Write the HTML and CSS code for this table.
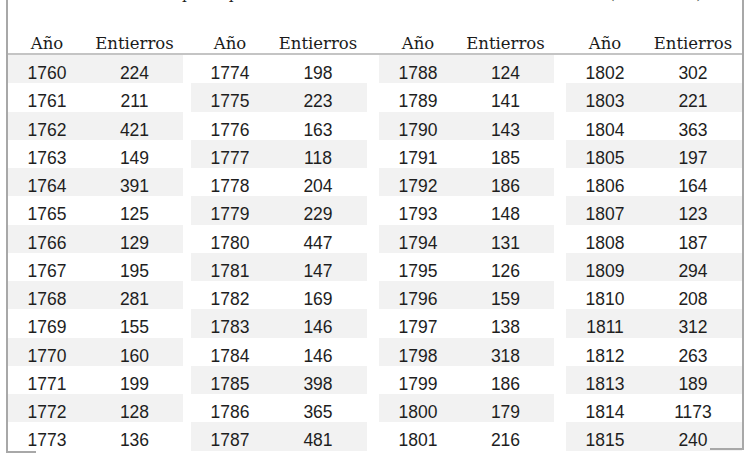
FILE: index.html
```html
<!DOCTYPE html>
<html lang="es">
<head>
<meta charset="utf-8">
<title>Entierros</title>
<link rel="stylesheet" href="styles.css">
</head>
<body>
<div class="frame">
  <div class="title"><div class="title-text"><span class="t1">Entierros en la parroquia de Santa Catarina</span><span class="t2">(1760-1815)</span></div></div>
  <div class="head">
    <div class="g g1"><div class="h"><span>Año</span><span>Entierros</span></div></div>
    <div class="g g2"><div class="h"><span>Año</span><span>Entierros</span></div></div>
    <div class="g g3"><div class="h"><span>Año</span><span>Entierros</span></div></div>
    <div class="g g4"><div class="h"><span>Año</span><span>Entierros</span></div></div>
  </div>
  <div class="body">
    <div class="g g1">
      <div class="r s"><span>1760</span><span>224</span></div>
      <div class="r"><span>1761</span><span>211</span></div>
      <div class="r s"><span>1762</span><span>421</span></div>
      <div class="r"><span>1763</span><span>149</span></div>
      <div class="r s"><span>1764</span><span>391</span></div>
      <div class="r"><span>1765</span><span>125</span></div>
      <div class="r s"><span>1766</span><span>129</span></div>
      <div class="r"><span>1767</span><span>195</span></div>
      <div class="r s"><span>1768</span><span>281</span></div>
      <div class="r"><span>1769</span><span>155</span></div>
      <div class="r s"><span>1770</span><span>160</span></div>
      <div class="r"><span>1771</span><span>199</span></div>
      <div class="r s"><span>1772</span><span>128</span></div>
      <div class="r"><span>1773</span><span>136</span></div>
    </div>
    <div class="g g2">
      <div class="r"><span>1774</span><span>198</span></div>
      <div class="r s"><span>1775</span><span>223</span></div>
      <div class="r"><span>1776</span><span>163</span></div>
      <div class="r s"><span>1777</span><span>118</span></div>
      <div class="r"><span>1778</span><span>204</span></div>
      <div class="r s"><span>1779</span><span>229</span></div>
      <div class="r"><span>1780</span><span>447</span></div>
      <div class="r s"><span>1781</span><span>147</span></div>
      <div class="r"><span>1782</span><span>169</span></div>
      <div class="r s"><span>1783</span><span>146</span></div>
      <div class="r"><span>1784</span><span>146</span></div>
      <div class="r s"><span>1785</span><span>398</span></div>
      <div class="r"><span>1786</span><span>365</span></div>
      <div class="r s"><span>1787</span><span>481</span></div>
    </div>
    <div class="g g3">
      <div class="r s"><span>1788</span><span>124</span></div>
      <div class="r"><span>1789</span><span>141</span></div>
      <div class="r s"><span>1790</span><span>143</span></div>
      <div class="r"><span>1791</span><span>185</span></div>
      <div class="r s"><span>1792</span><span>186</span></div>
      <div class="r"><span>1793</span><span>148</span></div>
      <div class="r s"><span>1794</span><span>131</span></div>
      <div class="r"><span>1795</span><span>126</span></div>
      <div class="r s"><span>1796</span><span>159</span></div>
      <div class="r"><span>1797</span><span>138</span></div>
      <div class="r s"><span>1798</span><span>318</span></div>
      <div class="r"><span>1799</span><span>186</span></div>
      <div class="r s"><span>1800</span><span>179</span></div>
      <div class="r"><span>1801</span><span>216</span></div>
    </div>
    <div class="g g4">
      <div class="r"><span>1802</span><span>302</span></div>
      <div class="r s"><span>1803</span><span>221</span></div>
      <div class="r"><span>1804</span><span>363</span></div>
      <div class="r s"><span>1805</span><span>197</span></div>
      <div class="r"><span>1806</span><span>164</span></div>
      <div class="r s"><span>1807</span><span>123</span></div>
      <div class="r"><span>1808</span><span>187</span></div>
      <div class="r s"><span>1809</span><span>294</span></div>
      <div class="r"><span>1810</span><span>208</span></div>
      <div class="r s"><span>1811</span><span>312</span></div>
      <div class="r"><span>1812</span><span>263</span></div>
      <div class="r s"><span>1813</span><span>189</span></div>
      <div class="r"><span>1814</span><span>1173</span></div>
      <div class="r s"><span>1815</span><span>240</span></div>
    </div>
  </div>
</div>
</body>
</html>
```
FILE: styles.css
```css
html, body {
  margin: 0;
  padding: 0;
  background: #ffffff;
}

.frame {
  position: relative;
  box-sizing: border-box;
  margin-left: 6px;
  width: 738px;
  height: 453px;
  padding: 0 2px;
  color: #1e1e1e;
}

.frame::before {
  content: "";
  position: absolute;
  left: 0;
  top: 0;
  bottom: 0;
  width: 28px;
  border-left: 2px solid #a8a8a8;
  border-bottom: 2px solid #a8a8a8;
  pointer-events: none;
}

.frame::after {
  content: "";
  position: absolute;
  right: 0;
  top: 0;
  bottom: 3px;
  width: 32px;
  border-right: 2px solid #a8a8a8;
  border-bottom: 2px solid #a8a8a8;
  pointer-events: none;
}

.title {
  height: 6px;
  overflow: hidden;
}

.title-text {
  display: flex;
  margin-top: -15px;
  font-family: "DejaVu Serif", serif;
  font-size: 15px;
  line-height: 18px;
  color: #1e1e1e;
  white-space: nowrap;
}

.t1 {
  margin-left: 56px;
}

.t2 {
  margin-left: auto;
  margin-right: 40px;
}

.head,
.body {
  display: flex;
}

.head {
  height: 47px;
  border-bottom: 2px solid #c4c4c4;
  align-items: flex-end;
}

.g1 { width: 175px; }
.g2 { width: 176px; margin-left: 8px; }
.g3 { width: 175px; margin-left: 12px; }
.g4 { width: 176px; margin-left: 12px; }

.h {
  display: grid;
  grid-template-columns: 78px 1fr;
  font-family: "DejaVu Serif", serif;
  font-size: 16.5px;
  line-height: 19px;
  text-align: center;
  color: #1a1a1a;
}

.body .g {
  display: flex;
  flex-direction: column;
}

.r {
  box-sizing: border-box;
  height: 28.25px;
  padding-top: 9px;
  display: grid;
  grid-template-columns: 78px 1fr;
  font-family: "Liberation Sans", Arial, sans-serif;
  font-size: 17.5px;
  line-height: 19.2px;
  text-align: center;
  color: #1e1e1e;
}

.r.s {
  background: #f2f2f2;
}
```
